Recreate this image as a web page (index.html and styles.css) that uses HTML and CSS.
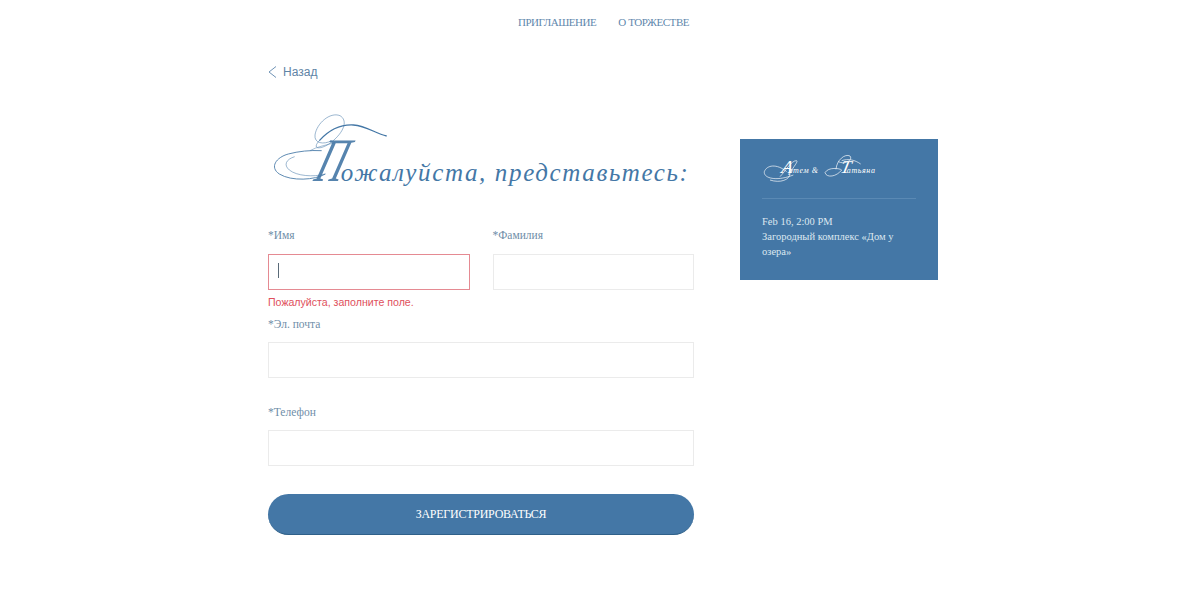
FILE: index.html
```html
<!DOCTYPE html>
<html lang="ru">
<head>
<meta charset="utf-8">
<title>Регистрация</title>
<link rel="stylesheet" href="styles.css">
</head>
<body>
<header class="topnav">
  <a class="navlink" href="#">ПРИГЛАШЕНИЕ</a>
  <a class="navlink" href="#">О ТОРЖЕСТВЕ</a>
</header>
<main class="page">
  <section class="formcol">
    <a class="back" href="#">
      <svg class="back-icon" viewBox="0 0 9 12" width="9" height="12"><path d="M8 .5 1 6l7 5.500" fill="none" stroke="#6f93b5" stroke-width="1"/></svg>
      <span>Назад</span>
    </a>
    <div class="headwrap">
      <svg class="flourish" viewBox="0 0 390 300" width="130" height="100" aria-hidden="true">
        <g fill="none" stroke="#4477a6">
          <path d="M380 108C345 100 320 78 280 75C240 73 205 92 178 122" stroke-width="4"/>
          <path d="M178 122C150 152 190 150 222 120C255 90 262 60 240 47C210 35 170 70 165 105C162 130 190 135 215 122" stroke-width="2" stroke-opacity=".8"/>
          <path d="M196 222C165 240 95 245 58 222C28 202 48 172 85 162C115 154 150 150 185 152" stroke-width="2.600"/>
          <path d="M196 222C160 232 110 228 88 210C70 195 78 178 104 170" stroke-width="2" stroke-opacity=".8"/>
          <path d="M150 152C170 140 200 135 225 128" stroke-width="2" stroke-opacity=".7"/>
        </g>
      </svg>
      <h1 class="heading"><span class="cap">П</span>ожалуйста, представьтесь:</h1>
    </div>
    <form class="form">
      <div class="row">
        <div class="field">
          <label class="label label-first">*Имя</label>
          <div class="input input-error"><span class="caret"></span></div>
          <div class="error">Пожалуйста, заполните поле.</div>
        </div>
        <div class="field">
          <label class="label label-first">*Фамилия</label>
          <div class="input"></div>
        </div>
      </div>
      <div class="field field-mail">
        <label class="label">*Эл. почта</label>
        <div class="input"></div>
      </div>
      <div class="field field-phone">
        <label class="label">*Телефон</label>
        <div class="input"></div>
      </div>
      <button class="submit" type="button">ЗАРЕГИСТРИРОВАТЬСЯ</button>
    </form>
  </section>
  <aside class="card">
    <svg class="card-flourish" viewBox="90 60 390 120" width="130" height="40" aria-hidden="true">
      <g fill="none" stroke="#fff" stroke-width="2">
        <path d="M170 125C140 100 110 105 103 125C100 145 140 155 190 135"/>
        <path d="M120 150C150 160 180 150 180 130C190 110 205 95 200 92C185 90 165 125 150 140"/>
        <path d="M285 128C295 110 330 115 335 120C320 140 290 145 285 128Z"/>
        <path d="M318 118C320 90 345 70 360 78C370 90 345 105 325 95"/>
        <path d="M335 92C355 85 375 90 392 102"/>
      </g>
    </svg>
    <div class="card-title"><span class="card-cap">А</span>ртем &amp; <span class="card-cap card-cap-t">Т</span>атьяна</div>
    <div class="card-rule"></div>
    <div class="card-text">Feb 16, 2:00 PM<br>Загородный комплекс «Дом у озера»</div>
  </aside>
</main>
</body>
</html>
```
FILE: styles.css
```css
* { box-sizing: border-box; }
html, body { margin: 0; padding: 0; background: #fff; }
body { height: 608px; overflow: hidden; font-family: "Liberation Serif", serif; color: #4477a6; }

.topnav { height: 44px; display: flex; justify-content: center; gap: 22px; padding: 15px 0 0 7px; }
.navlink { font-size: 11px; line-height: 14px; color: #5f88ad; text-decoration: none; letter-spacing: -.45px; }

.page { display: flex; width: 670px; margin-left: 268px; gap: 46px; }
.formcol { width: 426px; flex: none; }

.back { display: flex; align-items: center; gap: 6px; height: 16px; margin-top: 20px; font-family: "Liberation Sans", sans-serif; font-size: 12px; color: #5f84a6; text-decoration: none; }
.back-icon { flex: none; }

.headwrap { position: relative; height: 137px; padding: 63px 0 0 46px; }
.flourish { position: absolute; left: -8px; top: 20px; }
.heading { margin: 0; font-size: 25px; line-height: 34px; font-weight: 400; font-style: italic; color: #4477a6; white-space: nowrap; letter-spacing: 1.650px; }
.cap { display: inline-block; font-size: 62px; line-height: 34px; letter-spacing: 0; margin-right: -18px; transform: skewX(-18deg) scaleX(.62); transform-origin: 0 100%; opacity: .9; }

.form { display: block; margin-top: 11px; }
.row { display: flex; gap: 23px; }
.row .field { width: 201.500px; }
.label { display: block; height: 25px; font-size: 11.500px; line-height: 14px; color: #6f8ea8; }
.label-first { height: 26px; }
.input { height: 36px; border: 1px solid #ebebeb; background: #fff; padding: 8px 9px; }
.input-error { border-color: #e58a92; }
.caret { display: block; width: 1px; height: 15px; background: #5a6a78; }
.error { margin-top: 6px; font-family: "Liberation Sans", sans-serif; font-size: 10.600px; line-height: 13px; color: #e0505c; }
.field-mail { margin-top: 8px; }
.field-phone { margin-top: 27px; }
.submit { display: block; width: 426px; height: 41px; margin-top: 28px; border: 0; border-bottom: 1px solid #2f6089; border-radius: 21px; background: #4477a6; color: #fff; font-family: "Liberation Serif", serif; font-size: 12px; letter-spacing: -.25px; padding: 0; }

.card { position: relative; width: 198px; height: 141px; flex: none; margin-top: 95px; padding: 15px 22px; background: #4477a6; color: #dce7f0; }
.card-flourish { position: absolute; left: 20px; top: 11px; }
.card-title { height: 29px; padding-left: 20px; font-size: 8px; line-height: 34px; font-style: italic; color: #fff; white-space: nowrap; letter-spacing: .6px; }
.card-cap { display: inline-block; font-size: 18px; line-height: 20px; margin-right: -5px; transform: skewX(-12deg); }
.card-cap-t { margin-left: 20px; }
.card-rule { height: 1px; margin: 15px 0; background: #5a89b4; }
.card-text { font-size: 10.500px; line-height: 15px; }
```
